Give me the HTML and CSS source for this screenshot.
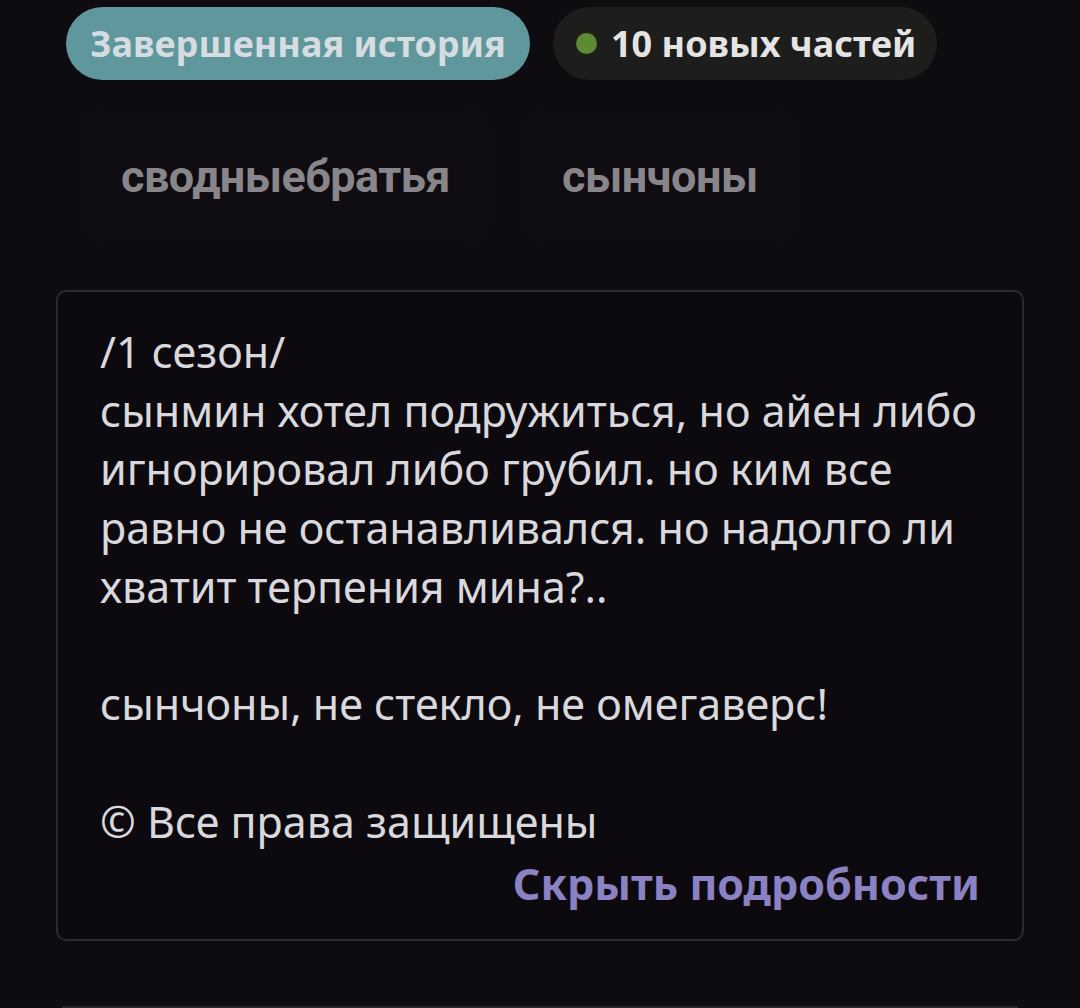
FILE: index.html
```html
<!DOCTYPE html>
<html lang="ru">
<head>
<meta charset="utf-8">
<link rel="stylesheet" href="styles.css">
</head>
<body>
<div class="page">
  <div class="badges">
    <span class="badge badge-done">Завершенная история</span>
    <span class="badge badge-new"><span class="dot"></span>10 новых частей</span>
  </div>
  <div class="tags">
    <span class="tag">сводныебратья</span>
    <span class="tag">сынчоны</span>
  </div>
  <div class="desc">
    <p class="text">/1 сезон/<br>сынмин хотел подружиться, но айен либо игнорировал либо грубил. но ким все равно не останавливался. но надолго ли хватит терпения мина?..<br><br>сынчоны, не стекло, не омегаверс!<br><br>© Все права защищены</p>
    <div class="toggle">Скрыть подробности</div>
  </div>
  <div class="bottom-line"></div>
</div>
</body>
</html>
```

FILE: styles.css
```css
html, body {
  margin: 0;
  padding: 0;
  background: #0e0c10;
}
body {
  width: 1080px;
  height: 1008px;
  overflow: hidden;
  font-family: "Noto Sans", "Open Sans", sans-serif;
}
.page {
  padding: 7px 56px 0 56px;
}
.badges {
  display: flex;
  gap: 23px;
  padding-left: 10px;
}
.badge {
  height: 73px;
  border-radius: 37px;
  display: inline-flex;
  align-items: center;
  font-weight: 700;
  font-size: 36px;
  box-sizing: border-box;
}
.badge-done {
  background: #5f979d;
  color: #d6dde0;
  width: 464px;
  justify-content: center;
}
.badge-new {
  background: #1d1d1b;
  color: #e4e4e4;
  width: 384px;
  padding-left: 23px;
}
.dot {
  width: 21px;
  height: 21px;
  border-radius: 50%;
  background: #5d8a32;
  margin-right: 14px;
  flex: none;
}
.tags {
  display: flex;
  gap: 30px;
  margin-top: 26px;
  padding-left: 24px;
}
.tag {
  height: 140px;
  border-radius: 24px;
  background: #0f0d11;
  display: inline-flex;
  align-items: center;
  justify-content: center;
  padding: 0 41px;
  font-family: Roboto, "Liberation Sans", Arial, sans-serif;
  font-weight: 700;
  font-size: 45px;
  color: #88868a;
  letter-spacing: -0.5px;
}
.desc {
  margin-top: 44px;
  border: 2px solid #2c2a2e;
  border-radius: 10px;
  background: #0c0a0e;
  height: 651px;
  box-sizing: border-box;
  padding: 31px 42px 0 42px;
}
.text {
  margin: 0;
  font-size: 43px;
  line-height: 58.7px;
  color: #d9d8dc;
}
.toggle {
  text-align: right;
  font-weight: 700;
  font-size: 43px;
  color: #8a82c2;
  line-height: 58px;
  margin-top: 4px;
}
.bottom-line {
  margin-top: 65px;
  height: 2px;
  background: #29272b;
  margin-left: 6px;
  margin-right: 6px;
}
```
